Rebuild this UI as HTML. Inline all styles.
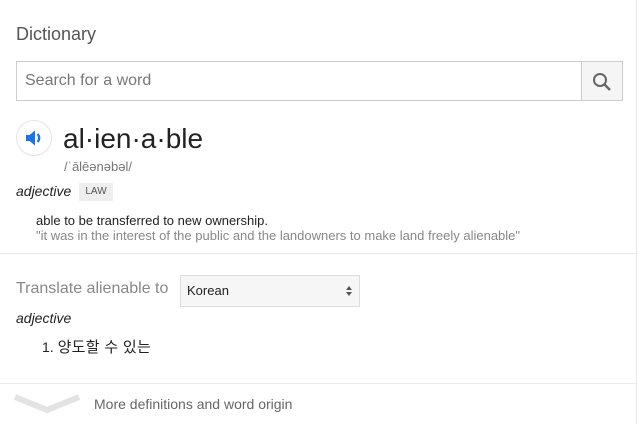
<!DOCTYPE html>
<html><head><meta charset="utf-8"><style>
html,body{margin:0;padding:0;background:#fff;}
body{width:638px;height:424px;position:relative;overflow:hidden;font-family:"Liberation Sans","Noto Sans CJK KR",sans-serif;}
.a{position:absolute;white-space:nowrap;}
</style></head><body>
<div class="a" style="left:0;top:0;width:636px;height:424px;border-right:1px solid #e8e8e8;"></div>
<div class="a" style="left:16px;top:24px;font-size:18px;color:#555;">Dictionary</div>
<div class="a" style="left:16px;top:61px;width:564px;height:38px;border:1px solid #ccc;border-right:none;"></div>
<div class="a" style="left:25px;top:72px;font-size:16px;color:#777;">Search for a word</div>
<div class="a" style="left:581px;top:61px;width:40px;height:38px;border:1px solid #ccc;background:#f5f5f5;">
<svg width="40" height="38" viewBox="0 0 40 38"><circle cx="18" cy="18" r="6" fill="none" stroke="#666" stroke-width="2"/><line x1="22.5" y1="22.5" x2="28" y2="28" stroke="#666" stroke-width="2.4"/></svg></div>
<div class="a" style="left:16px;top:120px;width:34px;height:34px;border-radius:50%;border:1px solid #e4e4e4;">
<svg width="34" height="34" viewBox="0 0 34 34"><path d="M9 14h3.5l5.5-4.5v15l-5.5-4.5h-3.5z" fill="#1a73e8"/><path d="M20.5 13a5.5 5.5 0 0 1 0 8" fill="none" stroke="#1a73e8" stroke-width="2.2"/></svg></div>
<div class="a" style="left:63px;top:123px;font-size:28px;color:#222;">al·ien·a·ble</div>
<div class="a" style="left:64px;top:159px;font-size:13px;color:#777;">/ˈālēənəbəl/</div>
<div class="a" style="left:16px;top:183px;font-size:14px;font-style:italic;color:#222;">adjective</div>
<div class="a" style="left:79px;top:183px;width:34px;height:18px;background:#eee;font-size:10px;color:#555;text-align:center;line-height:18px;">LAW</div>
<div class="a" style="left:36px;top:213px;font-size:13px;color:#222;">able to be transferred to new ownership.</div>
<div class="a" style="left:36px;top:228px;font-size:13px;color:#888;">"it was in the interest of the public and the landowners to make land freely alienable"</div>
<div class="a" style="left:0;top:253px;width:636px;height:1px;background:#e8e8e8;"></div>
<div class="a" style="left:16px;top:280px;font-size:16px;color:#888;">Translate alienable to</div>
<div class="a" style="left:180px;top:275px;width:178px;height:30px;border:1px solid #ddd;background:#f6f6f6;"></div>
<div class="a" style="left:187px;top:283px;font-size:13px;color:#222;">Korean</div>
<svg class="a" style="left:344px;top:284px;" width="10" height="14" viewBox="0 0 10 14"><path d="M2 6l3-4 3 4z M2 8l3 4 3-4z" fill="#555"/></svg>
<div class="a" style="left:16px;top:310px;font-size:14px;font-style:italic;color:#222;">adjective</div>
<div class="a" style="left:42px;top:336px;font-size:14px;color:#222;">1. <span style="font-size:15px;letter-spacing:0.3px;">양도할 수 있는</span></div>
<div class="a" style="left:0;top:383px;width:636px;height:1px;background:#ececec;"></div>
<svg class="a" style="left:12px;top:390px;" width="70" height="26" viewBox="0 0 70 26"><path d="M3 7l32 13 32-13" fill="none" stroke="#e3e3e3" stroke-width="6"/></svg>
<div class="a" style="left:94px;top:396px;font-size:14px;color:#666;">More definitions and word origin</div>
</body></html>
